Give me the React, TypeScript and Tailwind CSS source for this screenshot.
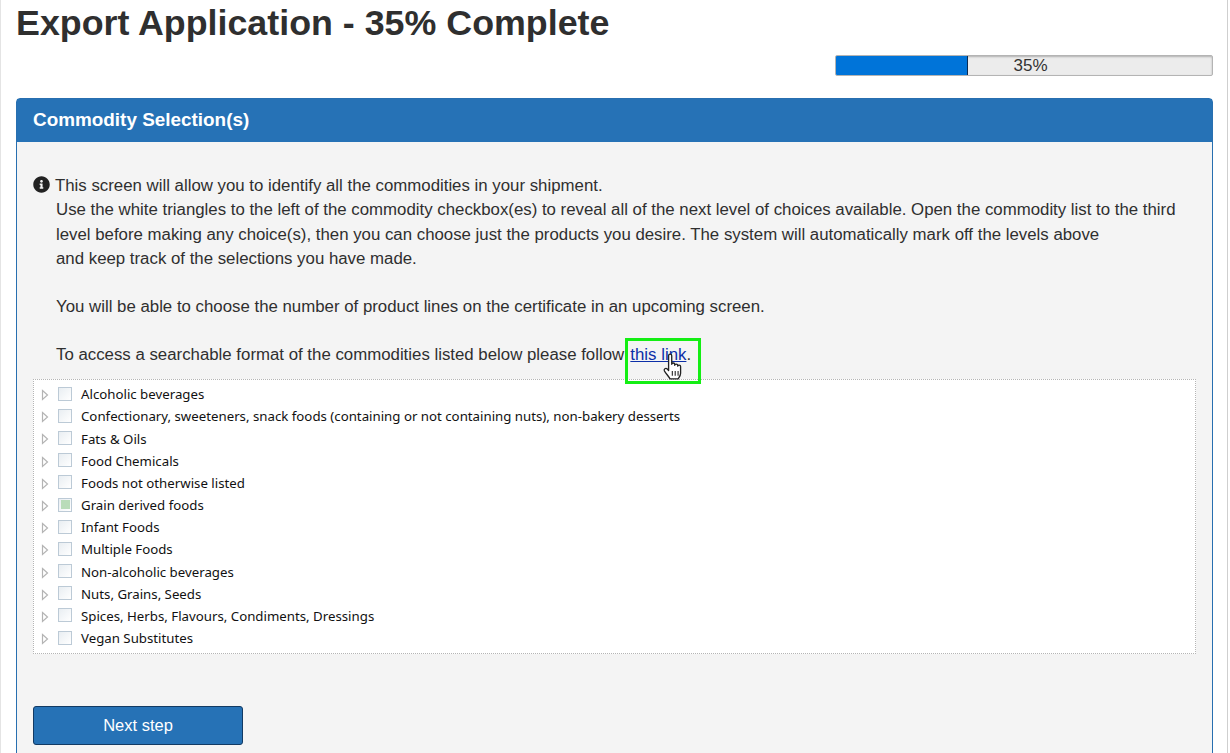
import { FaInfoCircle } from "react-icons/fa";

const items: [string, boolean][] = [
  ["Alcoholic beverages", false],
  ["Confectionary, sweeteners, snack foods (containing or not containing nuts), non-bakery desserts", false],
  ["Fats & Oils", false],
  ["Food Chemicals", false],
  ["Foods not otherwise listed", false],
  ["Grain derived foods", true],
  ["Infant Foods", false],
  ["Multiple Foods", false],
  ["Non-alcoholic beverages", false],
  ["Nuts, Grains, Seeds", false],
  ["Spices, Herbs, Flavours, Condiments, Dressings", false],
  ["Vegan Substitutes", false],
];

function Row({ label, checked }: { label: string; checked: boolean }) {
  return (
    <div className="flex h-[22.2px] items-center">
      <svg width="8" height="12" viewBox="0 0 8 12" className="ml-[7px] shrink-0">
        <path d="M1.5 1.5 L6.5 6 L1.5 10.5 Z" fill="#fff" stroke="#b4b4b4" strokeWidth="1.2" />
      </svg>
      <span className="ml-[9px] -mt-[3px] flex h-[14px] w-[14px] shrink-0 items-center justify-center border border-[#bccad6] bg-gradient-to-br from-[#e9eef2] to-white">
        {checked && <span className="h-[9px] w-[9px] bg-[#b9dcb9]" />}
      </span>
      <span className="ml-[9px] text-[13.25px] text-[#111] [font-family:'Noto_Sans',sans-serif]">{label}</span>
    </div>
  );
}

export default function App() {
  return (
    <div className="h-[753px] w-[1228px] overflow-hidden border-r border-l border-r-[#cfcfcf] border-l-[#e4e4e4] bg-white pl-[15px] pr-[14px] text-[#333] [font-family:'Liberation_Sans',Arial,sans-serif]">
      <h1 className="h-[46px] text-[35.8px] leading-[46px] font-bold text-[#2f2f2f]">Export Application - 35% Complete</h1>
      <div className="mt-[9px] flex justify-end">
        <div className="relative flex h-[21px] w-[378px] overflow-hidden rounded-[2px] border border-[#b4b4b4] bg-[#ececec] shadow-[inset_0_1px_2px_rgba(0,0,0,0.25)]">
          <div className="h-full w-[132px] border-r border-[#0b2b52] bg-[#0074d9]" />
          <span className="absolute inset-0 pl-[13px] text-center text-[17px] leading-[19px] text-[#333]">35%</span>
        </div>
      </div>
      <section className="mt-[22px] rounded-t-[4px] border border-[#286fb0] bg-[#f4f4f4]">
        <div className="flex h-[43px] items-center bg-[#2672b6] px-4 text-[18.9px] font-bold text-white">
          Commodity Selection(s)
        </div>
        <div className="px-4 pt-[32px]">
          <div className="relative pl-[22px] text-[16.82px] leading-[24.25px] text-[#2f2f2f]">
            <FaInfoCircle className="absolute left-0 top-[2px] text-[17px] text-[#222]" />
            <p>This screen will allow you to identify all the commodities in your shipment.</p>
            <p className="ml-[1px]">Use the white triangles to the left of the commodity checkbox(es) to reveal all of the next level of choices available. Open the commodity list to the third</p>
            <p className="ml-[1px]">level before making any choice(s), then you can choose just the products you desire. The system will automatically mark off the levels above</p>
            <p className="ml-[1px]">and keep track of the selections you have made.</p>
            <p className="mt-[24px] ml-[1px]">You will be able to choose the number of product lines on the certificate in an upcoming screen.</p>
            <p className="mt-[24px] ml-[1px]">
              To access a searchable format of the commodities listed below please follow{" "}
              <span className="relative ml-[1.5px]">
                <a href="#" className="text-[#0c2fa8] underline">this link</a>.
                <span className="absolute -top-[7px] -left-[5px] h-[46px] w-[76px] border-[3px] border-[#14ee14]" />
                <svg width="24" height="30" viewBox="0 0 20 25" className="absolute left-[32px] top-[8px]">
                  <path
                    d="M5.5 2.2c0-1.6 2.6-1.6 2.6 0v7.2c0-1.4 2.5-1.4 2.5 0v.8c0-1.3 2.5-1.3 2.5 0v.8c0-1.2 2.4-1.2 2.4.2v5.6c0 2-1 3.2-2 4.7H6.7c-1-1.7-3-4-4.6-6.4-1-1.6 1-3 2.3-1.7l1.1 1.2z"
                    fill="#fff"
                    stroke="#222"
                    strokeWidth="1.1"
                    strokeLinejoin="round"
                  />
                  <path d="M8.6 15v4M11 15v4M13.4 15v4" stroke="#222" strokeWidth="0.9" />
                </svg>
              </span>
            </p>
          </div>
          <div className="mt-[11px] h-[275px] border border-dotted border-[#b5b5b5] bg-white pt-[4.5px]">
            {items.map(([label, checked]) => (
              <Row key={label} label={label} checked={checked} />
            ))}
          </div>
          <button className="mt-[52px] block h-[39px] w-[210px] rounded-[3px] border border-[#123a63] bg-[#2672b6] text-[16.5px] text-white">
            Next step
          </button>
          <div className="h-[40px]" />
        </div>
      </section>
    </div>
  );
}
